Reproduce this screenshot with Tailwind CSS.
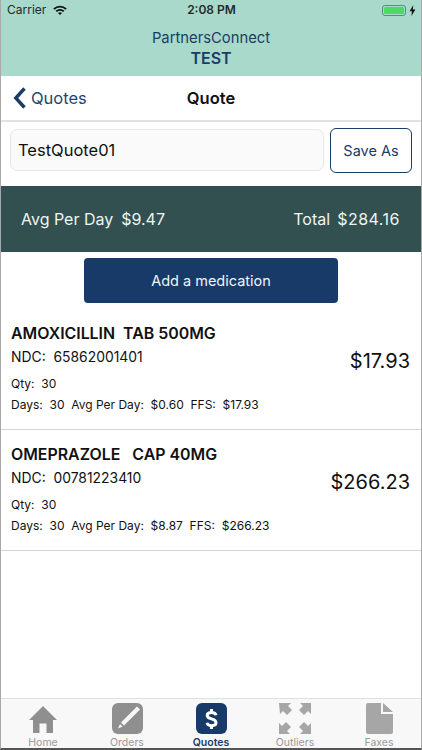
<!DOCTYPE html>
<html lang="en">
<head>
  <meta charset="UTF-8">
  <meta name="viewport" content="width=device-width, initial-scale=1.0">
  <title>Quote</title>
  <script src="https://cdn.jsdelivr.net/npm/@tailwindcss/browser@4"></script>
</head>
<body class="bg-white font-['Inter',sans-serif] overflow-hidden">
  <div class="w-[422px] h-[750px] flex flex-col border-x border-[#a9a9a9] border-b-2 border-b-[#555]">

    <!-- teal header with status bar -->
    <header class="h-[76px] bg-[#a9d9ca] shrink-0">
      <div class="h-[20px] flex items-center justify-between pl-[6px] pr-[5px] text-[12px] text-[#1d2b28]">
        <div class="flex items-center gap-[7px] w-[100px]">
          <span>Carrier</span>
          <svg width="14" height="10" viewBox="0 0 14 10"><path d="M0.2 3.4A9.8 9.8 0 0 1 13.8 3.4L12.5 4.7A8 8 0 0 0 1.5 4.7Z M2.6 5.8A6.4 6.4 0 0 1 11.4 5.8L10.1 7.1A4.6 4.6 0 0 0 3.9 7.1Z M5 8.1A3 3 0 0 1 9 8.1L7 10Z" fill="#111"/></svg>
        </div>
        <span class="font-semibold">2:08 PM</span>
        <div class="flex items-center justify-end gap-[3px] w-[100px]">
          <div class="w-[24px] h-[11px] rounded-[3px] border border-[#5b8b78] p-[1px]"><div class="h-full rounded-[1.5px] bg-[#4cd964]"></div></div>
          <svg width="7" height="11" viewBox="0 0 7 11"><path d="M4.3 0L0.6 6.2H3L2.4 11L6.4 4.5H3.8Z" fill="#111"/></svg>
        </div>
      </div>
      <div class="text-center text-[#1b3c67] mt-[8px]">
        <div class="text-[14.8px] leading-[20px]">PartnersConnect</div>
        <div class="text-[16px] leading-[20px] font-semibold">TEST</div>
      </div>
    </header>

    <!-- nav bar -->
    <nav class="h-[46px] shrink-0 relative flex items-center justify-center border-b-2 border-[#e2e2e2]">
      <div class="absolute left-[12px] top-[10px] flex items-center gap-[4px] text-[#1b3c67]">
        <svg width="14" height="24" viewBox="0 0 14 24"><path d="M11.5 2.5L2.8 12L11.5 21.5" fill="none" stroke="#1b3c67" stroke-width="3.4"/></svg>
        <span class="text-[16.5px] text-[#25466f]">Quotes</span>
      </div>
      <span class="text-[16.5px] font-semibold text-[#111]">Quote</span>
    </nav>

    <!-- name + save -->
    <div class="h-[64px] shrink-0 flex items-start pt-[6px] pl-[9px] pr-[9px] gap-[6px]">
      <div class="w-[314px] h-[42px] mt-[1px] rounded-[7px] bg-[#fafafa] border border-[#e8e8e8] flex items-center pl-[7px] text-[16.5px] text-[#111]">TestQuote01</div>
      <button class="w-[82px] h-[45px] rounded-[6px] border border-[#1b3c67] text-[14.5px] text-[#1b3c67]">Save As</button>
    </div>

    <!-- totals band -->
    <div class="h-[66px] shrink-0 bg-[#32504f] text-[#f0f4f3] text-[16px] flex items-center justify-between pl-[20px] pr-[21px]">
      <div class="flex gap-[8px]"><span>Avg Per Day</span><span>$9.47</span></div>
      <div class="flex gap-[7px]"><span>Total</span><span class="tracking-[0.5px]">$284.16</span></div>
    </div>

    <div class="flex justify-center pt-[6px] shrink-0">
      <button class="w-[254px] h-[45px] rounded-[4px] bg-[#173a68] text-[#f0f4f8] text-[14.5px]">Add a medication</button>
    </div>

    <!-- medication rows -->
    <div class="flex-1 min-h-0">
      <div class="h-[127px] border-b border-[#d5d5d5] flex items-center justify-between pl-[10px] pr-[11px] text-[#111]">
        <div class="pt-[5px]">
          <div class="text-[15.9px] leading-[20px] font-semibold whitespace-pre">AMOXICILLIN  TAB 500MG</div>
          <div class="text-[13.9px] leading-[18px] mt-[4px] whitespace-pre">NDC:  65862001401</div>
          <div class="text-[12px] leading-[16px] mt-[10px] whitespace-pre">Qty:  30</div>
          <div class="text-[12px] leading-[16px] mt-[5px] whitespace-pre">Days:  30  Avg Per Day:  $0.60  FFS:  $17.93</div>
        </div>
        <span class="text-[20px] mt-[-10px]">$17.93</span>
      </div>
      <div class="h-[121px] border-b border-[#d5d5d5] flex items-center justify-between pl-[10px] pr-[11px] text-[#111]">
        <div class="pb-[2px]">
          <div class="text-[15.9px] leading-[20px] font-semibold whitespace-pre">OMEPRAZOLE   CAP 40MG</div>
          <div class="text-[13.9px] leading-[18px] mt-[4px] whitespace-pre">NDC:  00781223410</div>
          <div class="text-[12px] leading-[16px] mt-[10px] whitespace-pre">Qty:  30</div>
          <div class="text-[12px] leading-[16px] mt-[5px] whitespace-pre">Days:  30  Avg Per Day:  $8.87  FFS:  $266.23</div>
        </div>
        <span class="text-[20px] mt-[-16px]">$266.23</span>
      </div>
    </div>

    <!-- tab bar -->
    <footer class="h-[50px] shrink-0 bg-[#f8f8f8] border-t border-[#e0e0e0] grid grid-cols-5 text-[10.5px] text-[#999] text-center">
      <div class="flex flex-col items-center">
        <svg class="mt-[5px]" width="30" height="30" viewBox="0 0 30 30"><path d="M15 2L29 16H25V29H18.5V19.5H11.5V29H5V16H1Z" fill="#8f8f8f"/></svg>
        <span class="leading-[13px] mt-[2px]">Home</span>
      </div>
      <div class="flex flex-col items-center">
        <svg class="mt-[4px]" width="31" height="31" viewBox="0 0 31 31"><rect width="31" height="31" rx="6" fill="#8f8f8f"/><path d="M25 3.5L28 6.5L12 22.5L9 19.5Z" fill="#f8f8f8"/><path d="M8 21L10.5 23.5L6 25.5Z" fill="#f8f8f8"/></svg>
        <span class="leading-[13px] mt-[2px]">Orders</span>
      </div>
      <div class="flex flex-col items-center text-[#1b3c67] font-semibold">
        <div class="mt-[4px] w-[31px] h-[31px] rounded-[6px] bg-[#173a68] flex items-center justify-center">
          <svg width="13" height="22" viewBox="0 0 13 22"><path d="M11 7.2C10.6 5.3 8.8 4.4 6.5 4.4C4 4.4 2.2 5.6 2.2 7.5C2.2 9.6 4 10.2 6.5 10.9C9.2 11.6 11 12.4 11 14.6C11 16.6 9 17.7 6.5 17.7C4 17.7 2.4 16.7 2 14.8M6.5 1V4.5M6.5 17.5V21" fill="none" stroke="#fff" stroke-width="3"/></svg>
        </div>
        <span class="leading-[13px] mt-[2px]">Quotes</span>
      </div>
      <div class="flex flex-col items-center">
        <svg class="mt-[4px]" width="32" height="31" viewBox="0 0 32 31" fill="#a6a6a6">
          <path d="M0 0H12L9 3L13 7L8 12L4 8L1 11Z M32 0V11L29 8L25 12L20 7L24 3L21 0Z M0 31V20L3 23L7 19L12 24L8 28L11 31Z M32 31H21L24 28L20 24L25 19L29 23L32 20Z"/>
        </svg>
        <span class="leading-[13px] mt-[2px]">Outliers</span>
      </div>
      <div class="flex flex-col items-center">
        <svg class="mt-[4px]" width="27" height="31" viewBox="0 0 27 31"><path d="M2 0H15V11H27V29A2 2 0 0 1 25 31H2A2 2 0 0 1 0 29V2A2 2 0 0 1 2 0Z M17 0L27 9H17Z" fill="#a6a6a6"/></svg>
        <span class="leading-[13px] mt-[2px]">Faxes</span>
      </div>
    </footer>
  </div>
</body>
</html>
